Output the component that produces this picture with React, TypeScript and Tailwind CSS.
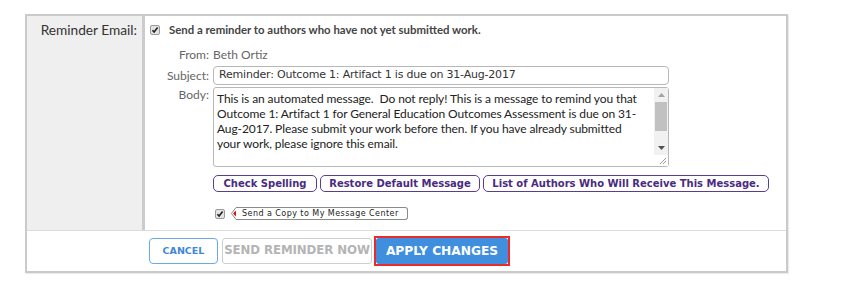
const lato = "font-['Lato','Open_Sans',sans-serif]";
const geo = "font-['DejaVu_Sans','Verdana',sans-serif]";

function Check() {
  return (
    <svg width="10" height="10" viewBox="0 0 10 10" className="shrink-0">
      <rect x="0.5" y="0.5" width="9" height="9" rx="1.5" fill="#e4e4e4" stroke="#9a9a9a" />
      <path d="M2.4 5.2 L4.1 7 L7.6 2.6" fill="none" stroke="#222" strokeWidth="1.6" />
    </svg>
  );
}

function Scrollbar() {
  return (
    <div className="flex w-[14px] shrink-0 flex-col bg-[#f1f1f1]">
      <div className="flex h-[14px] items-center justify-center">
        <svg width="7" height="4" viewBox="0 0 7 4">
          <path d="M0 4 L3.5 0 L7 4 Z" fill="#a3a3a3" />
        </svg>
      </div>
      <div className="mx-[1px] h-[29px] bg-[#c1c1c1]" />
      <div className="h-[10px]" />
      <div className="flex h-[14px] items-center justify-center">
        <svg width="7" height="4" viewBox="0 0 7 4">
          <path d="M0 0 L3.5 4 L7 0 Z" fill="#505050" />
        </svg>
      </div>
      <div className="flex flex-1 items-end justify-end bg-white p-[1px]">
        <svg width="8" height="8" viewBox="0 0 8 8">
          <path d="M1 7 L7 1 M4 7 L7 4" stroke="#9a9a9a" strokeWidth="1" />
        </svg>
      </div>
    </div>
  );
}

const purple =
  "flex h-[17px] items-center justify-center whitespace-nowrap rounded-[5px] border-[1.5px] border-[#5a3e8e] bg-white text-[10px] font-bold text-[#4a2b80]";

export default function App() {
  return (
    <div className="min-h-[288px] bg-white pl-[25px] pt-[14px]">
      <div className="flex w-[763px] flex-col border-2 border-[#cacaca] shadow-[1px_1px_1px_rgba(0,0,0,0.08)]">
        <div className="flex h-[214px]">
          <div
            className={`w-[118px] shrink-0 border-r-[3px] border-[#cccccc] bg-[#efefef] pr-[5px] pt-[5px] text-right text-[13.7px] leading-[17px] text-[#333] ${lato}`}
          >
            Reminder Email:
          </div>
          <div className={`flex min-w-0 flex-1 flex-col pt-[7px] ${lato}`}>
            <div className="ml-[5px] flex h-[14px] items-center gap-[9px]">
              <Check />
              <span className="text-[11.4px] font-bold text-[#444]">
                Send a reminder to authors who have not yet submitted work.
              </span>
            </div>

            <div className="mt-[11px] flex h-[14px] items-center text-[12px] text-[#666]">
              <span className="w-[64px] text-right">From:</span>
              <span className="ml-[4px]">Beth Ortiz</span>
            </div>

            <div className="mt-[4px] flex items-center">
              <span className="w-[64px] text-right text-[12px] text-[#666]">Subject:</span>
              <div
                className={`ml-[4px] flex h-[19px] w-[456px] items-center rounded-[4px] border border-[#b8b8b8] pl-[5px] text-[11px] tracking-[-0.2px] text-[#333] ${geo}`}
              >
                Reminder: Outcome 1: Artifact 1 is due on 31-Aug-2017
              </div>
            </div>

            <div className="mt-[2px] flex items-start">
              <span className="w-[64px] pt-[1px] text-right text-[12px] leading-[14px] text-[#666]">Body:</span>
              <div className="ml-[4px] flex h-[80px] w-[456px] rounded-[3px] border border-[#b8b8b8]">
                <div className="min-w-0 flex-1 overflow-hidden whitespace-pre pl-[3px] pt-[3px] text-[12px] leading-[15px] tracking-[-0.1px] text-[#222]">
                  <div>This is an automated message.  Do not reply! This is a message to remind you that</div>
                  <div>Outcome 1: Artifact 1 for General Education Outcomes Assessment is due on 31-</div>
                  <div>Aug-2017. Please submit your work before then. If you have already submitted</div>
                  <div>your work, please ignore this email.</div>
                </div>
                <Scrollbar />
              </div>
            </div>

            <div className={`ml-[68px] mt-[8px] flex gap-[3px] ${geo}`}>
              <div className={`${purple} w-[104px]`}>Check Spelling</div>
              <div className={`${purple} w-[160px]`}>Restore Default Message</div>
              <div className={`${purple} w-[286px]`}>List of Authors Who Will Receive This Message.</div>
            </div>

            <div className="ml-[70px] mt-[15px] flex h-[13px] items-center gap-[6px]">
              <Check />
              <div className="flex h-[13px] items-center">
                <svg width="6" height="13" viewBox="0 0 6 13" className="shrink-0">
                  <path d="M6 0.5 L5 0.5 L0.5 6.5 L5 12.5 L6 12.5" fill="white" stroke="#8a8a8a" />
                  <path d="M2 6.5 L5 3.5 L5 9.5 Z" fill="#d8141a" />
                </svg>
                <div
                  className={`flex h-[13px] w-[171px] items-center whitespace-nowrap rounded-r-[3px] border border-l-0 border-[#8a8a8a] pl-[5px] text-[8px] tracking-[0.45px] text-[#222] ${geo}`}
                >
                  Send a Copy to My Message Center
                </div>
              </div>
            </div>
          </div>
        </div>

        <div className="h-px bg-[#dcdcdc]" />

        <div className={`flex h-[40px] items-center whitespace-nowrap pl-[122px] font-bold ${geo}`}>
          <div className="flex h-[26px] w-[69px] items-center justify-center rounded-[4px] border border-[#6aaae8] text-[9.5px] text-[#3f87d6]">
            CANCEL
          </div>
          <div className="ml-[4px] flex h-[26px] w-[150px] items-center justify-center rounded-[3px] border border-[#cfcfcf] text-[11.8px] tracking-[-0.1px] text-[#b4b4b4]">
            SEND REMINDER NOW
          </div>
          <div className="ml-[2px] border-2 border-[#ec2a2a] p-0">
            <div className="flex h-[26px] w-[132px] items-center justify-center rounded-[3px] bg-[#3f8fde] text-[12.2px] text-white">
              APPLY CHANGES
            </div>
          </div>
        </div>
      </div>
    </div>
  );
}
